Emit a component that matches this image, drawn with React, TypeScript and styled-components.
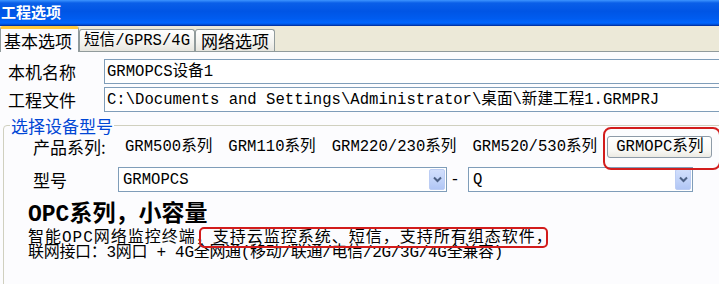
import React from 'react';
import styled, { createGlobalStyle } from 'styled-components';

const MONO = `"Liberation Mono", "Noto Sans CJK SC", monospace`;
const CJK = `"Noto Sans CJK SC", sans-serif`;

const SERIES = ['GRM500系列', 'GRM110系列', 'GRM220/230系列', 'GRM520/530系列'];

const GlobalStyle = createGlobalStyle`
  html, body {
    margin: 0;
    padding: 0;
    background: #fcfcfe;
    overflow: hidden;
  }
  body {
    font-family: ${CJK};
    color: #000;
  }
`;

const Window = styled.div`
  display: flex;
  flex-direction: column;
  width: 719px;
  height: 284px;
  overflow: hidden;
`;

const TitleBar = styled.div`
  display: flex;
  align-items: center;
  height: 26px;
  box-sizing: border-box;
  padding: 0 0 1px 1px;
  border-bottom: 1px solid #0034a8;
  background: linear-gradient(180deg, #3d95ff 0%, #0a5fe8 12%, #0055e5 45%, #005cf0 75%, #0066ff 92%, #0047c8 100%);
  color: #fff;
  font: bold 15px/18px ${CJK};
`;

const TabStrip = styled.div`
  display: flex;
  align-items: flex-end;
  height: 26px;
  box-sizing: border-box;
  background: #ece9d8;
  border-bottom: 1px solid #919b9c;
`;

const Tab = styled.div<{ $active?: boolean; $pad: string; $mono?: boolean }>`
  position: relative;
  display: flex;
  align-items: center;
  box-sizing: border-box;
  padding: ${({ $pad }) => $pad};
  height: ${({ $active }) => ($active ? '26px' : '22px')};
  margin-bottom: ${({ $active }) => ($active ? '-1px' : '0')};
  border: 1px solid #919b9c;
  border-bottom: none;
  border-top: ${({ $active }) => ($active ? '3px solid #ffc83c' : '1px solid #919b9c')};
  border-radius: 3px 3px 0 0;
  background: ${({ $active }) => ($active ? '#fcfcfe' : 'linear-gradient(180deg, #ffffff 0%, #f3f3ef 60%, #e6e5de 100%)')};
  font-family: ${({ $mono }) => ($mono ? MONO : CJK)};
  font-size: ${({ $mono }) => ($mono ? '15.6px' : '17px')};
  line-height: 20px;
  white-space: nowrap;
  z-index: ${({ $active }) => ($active ? 1 : 0)};
`;

const Panel = styled.div`
  display: flex;
  flex-direction: column;
  flex: 1;
  padding-top: 7px;
  background: #fcfcfe;
  overflow: hidden;
`;

const FieldRow = styled.div`
  display: flex;
  align-items: center;
  padding-left: 8px;
  & + & {
    margin-top: 3px;
  }
`;

const FieldLabel = styled.span`
  width: 96px;
  flex: none;
  font: 17px/20px ${CJK};
`;

const TextBox = styled.div`
  flex: 1;
  height: 25px;
  box-sizing: border-box;
  margin-right: -12px;
  padding-left: 2px;
  display: flex;
  align-items: center;
  border: 1px solid #7f9db9;
  background: #fff;
  font: 15.6px/20px ${MONO};
  white-space: nowrap;
`;

const GroupBox = styled.fieldset`
  min-width: 0;
  min-height: 200px;
  margin: 5px -20px 0 3px;
  padding: 0;
  border: 1px solid #d0d0bf;
  border-radius: 4px;
`;

const GroupTitle = styled.legend`
  margin-left: 6px;
  padding: 0 1px;
  color: #0046d5;
  font: 17px/17px ${CJK};
`;

const SeriesRow = styled.div`
  display: flex;
  align-items: center;
  height: 24px;
  margin: 1px 0 0 29px;
`;

const RowLabel = styled.span`
  width: 85px;
  flex: none;
  font: 17px/18px ${CJK};
`;

const SeriesList = styled.div`
  display: flex;
  align-items: center;
  gap: 16px;
  margin-left: 7px;
`;

const SeriesOption = styled.span`
  font: 15.6px/18px ${MONO};
  white-space: nowrap;
  cursor: pointer;
`;

const Marked = styled.span`
  position: relative;
  display: inline-flex;
  margin-left: -6px;
  &::after {
    content: '';
    position: absolute;
    top: -9px;
    left: -4px;
    right: -9px;
    bottom: -12px;
    border: 2px solid #d21c1c;
    border-radius: 8px;
    pointer-events: none;
  }
`;

const SeriesButton = styled.button`
  height: 22px;
  padding: 0 7px 0 8px;
  border: 1px solid #8e9ba8;
  border-radius: 3px;
  background: linear-gradient(180deg, #ffffff 0%, #f7f7f4 70%, #eceae3 100%);
  color: #000;
  font: 15.6px/18px ${MONO};
  white-space: nowrap;
`;

const ModelRow = styled.div`
  display: flex;
  align-items: center;
  margin: 8px 0 0 29px;
`;

const Select = styled.div<{ $width: number }>`
  display: flex;
  align-items: center;
  width: ${({ $width }) => $width}px;
  height: 25px;
  box-sizing: border-box;
  padding: 1px;
  border: 1px solid #7f9db9;
  background: #fff;
`;

const SelectValue = styled.span`
  flex: 1;
  padding-left: 3px;
  font: 15.6px/20px ${MONO};
`;

const DropButton = styled.span`
  display: flex;
  align-items: center;
  justify-content: center;
  width: 16px;
  height: 21px;
  box-sizing: border-box;
  border: 1px solid #bccdf4;
  border-radius: 2px;
  background: linear-gradient(180deg, #d2dffc 0%, #bfd1f8 60%, #b1c6f5 100%);
`;

const Dash = styled.span`
  width: 10px;
  margin: 0 8px 0 3px;
  text-align: center;
  font: 15.6px/20px ${MONO};
`;

const Headline = styled.div`
  margin: 11px 0 0 24px;
  font: bold 23px/24px ${MONO};
  white-space: nowrap;
`;

const Description = styled.div`
  margin: 4px 0 0 24px;
`;

const DescLine = styled.div<{ $spacing: number }>`
  font: 16px/15px ${MONO};
  letter-spacing: ${({ $spacing }) => $spacing}px;
  white-space: nowrap;
`;

const MarkedText = styled.span`
  position: relative;
  display: inline-block;
  line-height: 15px;
  &::after {
    content: '';
    position: absolute;
    top: -4px;
    bottom: -2px;
    left: -14px;
    right: 5px;
    border: 2px solid #d21c1c;
    border-radius: 5px;
    pointer-events: none;
  }
`;

const Chevron = () => (
  <svg width="9" height="7" viewBox="0 0 9 7">
    <path d="M1 1.5 L4.5 5 L8 1.5" fill="none" stroke="#4d6185" strokeWidth="2" />
  </svg>
);

const ComboBox: React.FC<{ value: string; width: number }> = ({ value, width }) => (
  <Select $width={width}>
    <SelectValue>{value}</SelectValue>
    <DropButton>
      <Chevron />
    </DropButton>
  </Select>
);

export default function App() {
  return (
    <Window>
      <GlobalStyle />
      <TitleBar>工程选项</TitleBar>

      <TabStrip>
        <Tab $active $pad="0 6px 0 3px">基本选项</Tab>
        <Tab $mono $pad="0 4px 0 4px">短信/GPRS/4G</Tab>
        <Tab $pad="0 5px 0 5px">网络选项</Tab>
      </TabStrip>

      <Panel>
        <FieldRow>
          <FieldLabel>本机名称</FieldLabel>
          <TextBox>GRMOPCS设备1</TextBox>
        </FieldRow>
        <FieldRow>
          <FieldLabel>工程文件</FieldLabel>
          <TextBox>C:\Documents and Settings\Administrator\桌面\新建工程1.GRMPRJ</TextBox>
        </FieldRow>

        <GroupBox>
          <GroupTitle>选择设备型号</GroupTitle>

          <SeriesRow>
            <RowLabel>产品系列:</RowLabel>
            <SeriesList>
              {SERIES.map((s) => (
                <SeriesOption key={s}>{s}</SeriesOption>
              ))}
              <Marked>
                <SeriesButton>GRMOPC系列</SeriesButton>
              </Marked>
            </SeriesList>
          </SeriesRow>

          <ModelRow>
            <RowLabel>型号</RowLabel>
            <ComboBox value="GRMOPCS" width={329} />
            <Dash>-</Dash>
            <ComboBox value="Q" width={225} />
          </ModelRow>

          <Headline>OPC系列，小容量</Headline>
          <Description>
            <DescLine $spacing={1}>
              智能OPC网络监控终端，<MarkedText>支持云监控系统、短信，支持所有组态软件，</MarkedText>
            </DescLine>
            <DescLine $spacing={-0.3}>联网接口：3网口 + 4G全网通(移动/联通/电信/2G/3G/4G全兼容)</DescLine>
          </Description>
        </GroupBox>
      </Panel>
    </Window>
  );
}
